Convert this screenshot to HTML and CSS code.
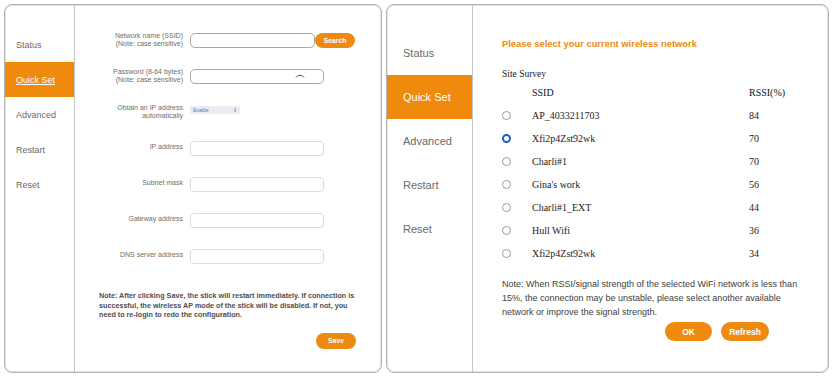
FILE: index.html
```html
<!DOCTYPE html>
<html lang="en">
<head>
    <meta charset="UTF-8">
    <meta name="viewport" content="width=device-width, initial-scale=1.0">
    <title>Quick Set</title>
    <link rel="stylesheet" href="styles.css">
</head>
<body>
    <div class="screens">
        <!-- left: quick set form -->
        <div class="panel panel-left">
            <ul class="nav nav-small">
                <li>Status</li>
                <li class="active"><u>Quick Set</u></li>
                <li>Advanced</li>
                <li>Restart</li>
                <li>Reset</li>
            </ul>
            <div class="form">
                <div class="row">
                    <label>Network name (SSID)<br>(Note: case sensitive)</label>
                    <div class="field-group">
                        <span class="field field-dark field-short"></span>
                        <button class="btn btn-search">Search</button>
                    </div>
                </div>
                <div class="row">
                    <label>Password (8-64 bytes)<br>(Note: case sensitive)</label>
                    <span class="field field-dark">
                        <svg class="eye" width="10" height="5" viewBox="0 0 10 5"><path d="M1 4.5 A4.5 4 0 0 1 9 4.5" fill="none" stroke="#444" stroke-width="0.9"/></svg>
                    </span>
                </div>
                <div class="row">
                    <label>Obtain an IP address<br>automatically</label>
                    <span class="select">Enable<span class="arrow">&#8661;</span></span>
                </div>
                <div class="row">
                    <label class="single">IP address</label>
                    <span class="field"></span>
                </div>
                <div class="row">
                    <label class="single">Subnet mask</label>
                    <span class="field"></span>
                </div>
                <div class="row">
                    <label class="single">Gateway address</label>
                    <span class="field"></span>
                </div>
                <div class="row">
                    <label class="single">DNS server address</label>
                    <span class="field"></span>
                </div>
                <p class="note note-left">Note: After clicking Save, the stick will restart immediately. If connection is successful, the wireless AP mode of the stick will be disabled. If not, you need to re-login to redo the configuration.</p>
                <div class="actions actions-left">
                    <button class="btn btn-save">Save</button>
                </div>
            </div>
        </div>

        <!-- right: site survey -->
        <div class="panel panel-right">
            <ul class="nav nav-large">
                <li>Status</li>
                <li class="active">Quick Set</li>
                <li>Advanced</li>
                <li>Restart</li>
                <li>Reset</li>
            </ul>
            <div class="survey">
                <h2>Please select your current wireless network</h2>
                <div class="survey-title">Site Survey</div>
                <div class="table">
                    <span></span><span class="th">SSID</span><span class="th">RSSI(%)</span>
                    <span class="radio"></span><span>AP_4033211703</span><span>84</span>
                    <span class="radio checked"></span><span>Xfi2p4Zst92wk</span><span>70</span>
                    <span class="radio"></span><span>Charli#1</span><span>70</span>
                    <span class="radio"></span><span>Gina's work</span><span>56</span>
                    <span class="radio"></span><span>Charli#1_EXT</span><span>44</span>
                    <span class="radio"></span><span>Hull Wifi</span><span>36</span>
                    <span class="radio"></span><span>Xfi2p4Zst92wk</span><span>34</span>
                </div>
                <p class="note note-right">Note: When RSSI/signal strength of the selected WiFi network is less than 15%, the connection may be unstable, please select another available network or improve the signal strength.</p>
                <div class="actions actions-right">
                    <button class="btn btn-ok">OK</button>
                    <button class="btn btn-refresh">Refresh</button>
                </div>
            </div>
        </div>
    </div>
</body>
</html>
```
FILE: styles.css
```css
body {
    font-family: "Liberation Sans", Arial, sans-serif;
    background-color: #ffffff;
    margin: 0;
    padding: 0;
}
.screens {
    display: flex;
    gap: 4px;
    padding: 4px 4px 0 4px;
}
.panel {
    display: flex;
    height: 369px;
    box-sizing: border-box;
    border: 1px solid #b4b4b4;
    border-radius: 8px;
    box-shadow: inset 0 0 0 1px #e2e2e2;
    overflow: hidden;
}
.panel-left {
    width: 378px;
}
.panel-right {
    width: 443px;
}
.nav {
    list-style: none;
    margin: 0;
    border-right: 1px solid #c4c4c4;
    color: #6a6a6a;
}
.nav li {
    display: flex;
    align-items: center;
}
.nav li.active {
    background-color: #f08a0c;
    color: #ffffff;
}
.nav-small {
    width: 69px;
    padding: 22px 0 0 0;
    font-size: 9px;
}
.nav-small li {
    height: 35px;
    padding-left: 11px;
}
.nav-large {
    width: 85px;
    padding: 26px 0 0 0;
    font-size: 11px;
}
.nav-large li {
    height: 44px;
    padding-left: 16px;
}

/* quick set form */
.form {
    flex: 1;
    padding-top: 17px;
}
.row {
    display: flex;
    align-items: center;
    height: 36px;
}
.row label {
    width: 108px;
    margin-right: 7px;
    text-align: right;
    font-size: 7px;
    line-height: 8px;
    color: #6e6e6e;
}
.row label.single {
    align-self: center;
    margin-top: -3px;
}
.field {
    display: flex;
    align-items: center;
    justify-content: flex-end;
    width: 134px;
    height: 15px;
    box-sizing: border-box;
    border: 1px solid #dcdcdc;
    border-radius: 4px;
}
.field-dark {
    border-color: #a8a8a8;
    border-radius: 5px;
}
.field-short {
    width: 125px;
}
.field-group {
    display: flex;
    align-items: center;
    gap: 0;
}
.eye {
    margin-right: 18px;
    margin-bottom: 2px;
}
.select {
    display: flex;
    justify-content: space-between;
    width: 50px;
    height: 8px;
    padding: 0 3px;
    box-sizing: border-box;
    background-color: #ececf0;
    color: #4a78c0;
    font-size: 5px;
    line-height: 8px;
    margin-top: -4px;
}
.arrow {
    font-size: 5px;
}
.btn {
    border: none;
    border-radius: 9px;
    background-color: #ee8a10;
    color: #ffffff;
    font-family: "Liberation Sans", Arial, sans-serif;
    font-weight: bold;
    padding: 0;
    cursor: pointer;
}
.btn-search,
.btn-save {
    width: 40px;
    height: 15px;
    font-size: 6.8px;
    border-radius: 8px;
}
.note {
    margin: 0;
    color: #4e4e4e;
}
.note-left {
    margin: 17px 24px 0 24px;
    font-size: 7.2px;
    font-weight: bold;
    line-height: 9.5px;
}
.actions-left {
    display: flex;
    justify-content: flex-end;
    padding-right: 25px;
    margin-top: 13px;
}
.btn-save {
    height: 16px;
}

/* site survey */
.survey {
    flex: 1;
    padding: 33px 0 0 29px;
}
.survey h2 {
    margin: 0;
    font-size: 9.4px;
    line-height: 12px;
    color: #f08a0c;
}
.survey-title {
    margin-top: 19px;
    font-family: "Liberation Serif", "Times New Roman", serif;
    font-size: 9.5px;
    color: #222222;
}
.table {
    display: grid;
    grid-template-columns: 30px 217px auto;
    grid-auto-rows: 23px;
    align-items: center;
    margin-top: 2px;
    font-family: "Liberation Serif", "Times New Roman", serif;
    font-size: 10px;
    color: #222222;
}
.th {
    font-weight: 500;
    color: #111111;
}
.radio {
    width: 9px;
    height: 9px;
    box-sizing: border-box;
    border: 1px solid #9a9a9a;
    border-radius: 50%;
    margin-left: 0;
}
.radio.checked {
    border: 2.5px solid #1c5fc2;
}
.note-right {
    margin: 12px 20px 0 0;
    font-size: 9px;
    line-height: 14px;
    color: #3e3e3e;
}
.actions-right {
    display: flex;
    gap: 9px;
    margin: 3px 0 0 163px;
}
.btn-ok,
.btn-refresh {
    height: 19px;
    font-size: 8.5px;
    border-radius: 10px;
}
.btn-ok {
    width: 47px;
}
.btn-refresh {
    width: 48px;
}
```
